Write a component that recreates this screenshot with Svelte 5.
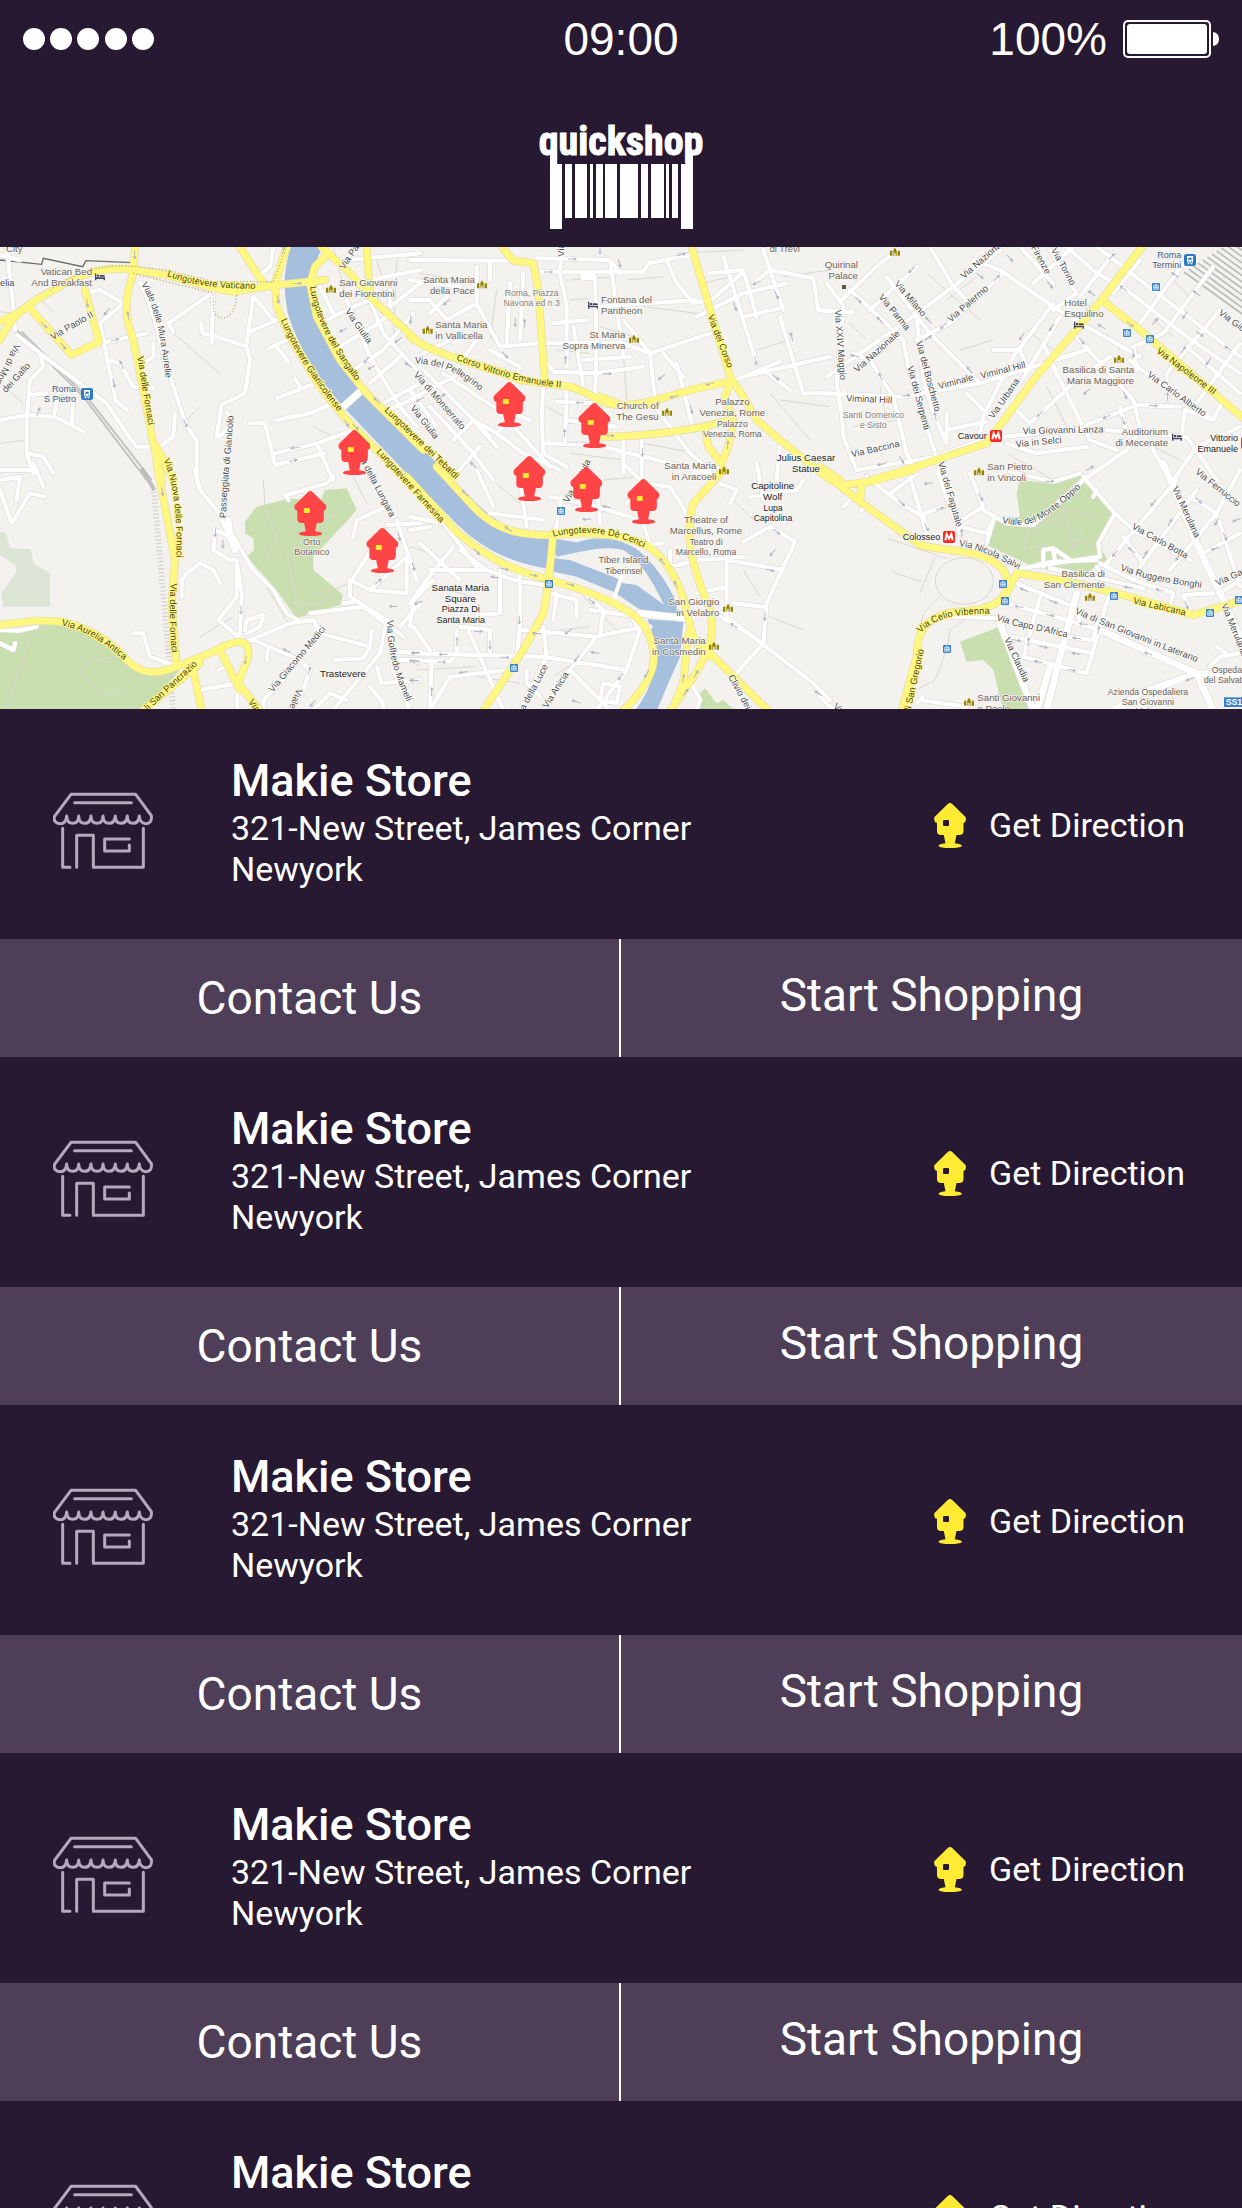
<script>
  const stores = Array.from({ length: 5 }, (_, id) => ({
    id,
    name: 'Makie Store',
    street: '321-New Street, James Corner',
    city: 'Newyork'
  }));

  // The map is stored as six sheets; every sheet has its own origin.
  const sheets = [
    {
      x: 0, y: -21,
      parks: '',
      pale: '',
      water: 'M935,-10C885,80 895,150 905,210C935,310 1000,400 1060,470L1270,690',
      thin: 'M0,215L45,220M100,160L160,215M0,430L70,490M0,610L80,600M560,540L600,500M850,270L1030,500M1000,21L1040,180M1130,60L1150,120M1190,60L1180,300M940,560L1040,610M520,280L660,400',
      minor: 'M420,130C470,220 480,330 510,410L560,560L590,600L590,720M250,160L300,150L370,190L300,250L330,400L345,470M300,310L440,280M640,150L635,310M635,285L740,320L750,360L735,460L665,495L650,590C690,580 700,530 680,520M760,170L740,310M750,275L830,240M765,175L820,240M505,250L635,160M505,250L520,275M603,250L608,280L635,285M805,325L860,300M830,320L865,365M830,475L945,430M885,415L900,440M830,540L930,520L1000,490M750,550L795,550L825,675L975,640M825,640L950,610L1060,570M950,610L1000,720M50,285L120,340L200,400L320,490L380,580L410,620L480,620L520,590L525,520M325,360L360,370L400,440L460,445M460,310L460,350L430,370M345,480L380,510M120,340L130,380L90,420L80,540L80,640L100,700M90,465L140,460M0,540L80,525L160,530L180,450L200,450M160,530L215,555L220,480M215,555L250,575M80,640L130,650L160,700M0,690L90,690M20,21L40,200L45,270M0,45L60,60M780,105L810,80L820,21M960,250L1060,200L1110,180M1040,180L1110,350L1200,500L1250,560M1110,180L1150,280L1260,400M1040,60L1260,40M1110,120L1260,90M1000,330L1120,260L1160,230M1060,390L1150,330L1240,220M1110,430L1200,350M1150,490L1260,430M1170,150L1170,200L1260,130M960,140L990,200L1000,220M1160,510L1260,470',
      wide: 'M1030,500L1092,445',
      yellow: 'M0,300C40,215 90,190 160,150C230,110 300,75 400,90L500,105C600,130 650,150 700,155L830,135L975,120M0,245L90,200M90,205L215,345L297,305L255,150M405,21L400,100C370,180 375,230 400,300L430,450L460,610L485,720M470,620L520,720M720,21L790,130M860,21L825,130L830,200L870,290L960,440L1040,540L1260,760M985,40L945,80L930,130L950,230L1020,360L1100,460L1270,630M965,21L1050,100L1130,190L1260,310M1100,21L1110,170'
    },
    {
      x: 1230, y: -21,
      parks: '',
      pale: '',
      water: '',
      thin: 'M480,120L620,110M480,180L540,175M650,120L760,110M570,260L700,300M640,340L650,480M880,130L960,110M800,40L1000,30M1120,110L1260,90M1040,330L1140,300M1080,460L1200,600M700,200L860,220M440,330L540,340M410,500L460,530M30,100L200,130M260,150L240,300M1110,480L1260,500M700,610L860,640M480,640L640,660',
      minor: 'M0,60L290,62M380,55L600,60L630,100M390,95L560,95L700,95L715,70L840,45M455,20L450,100L470,200L470,380M555,110L560,300L555,480M430,250L530,240M490,260L520,440M600,60L640,350M0,180L60,180L110,240L200,190L270,320L390,310L640,310L720,340L900,280M200,80L200,200M240,70L240,120M150,130L60,220M0,120L150,140M240,330L330,380L300,450M300,130L290,310M340,100L330,300M720,340L735,480M770,60L800,130L850,190L900,180M560,200L860,180M700,380L560,400L430,395L400,360M520,360L660,350M905,180L1000,95M900,100L1000,90L1040,230M940,50L1040,370M1000,230L1110,205M1030,130L1080,90L1210,115L1225,210L1260,215M1060,30L1120,210M1110,230L1180,460L1260,460M1000,410L1260,350M975,420L1110,365M1060,390L1140,450M860,230L1000,160L1130,130M800,370L850,570M760,340L820,410M640,240L720,340M735,500L840,640L900,690M400,430L395,540L400,640L470,680M470,440L465,610M270,500L330,580L420,680M130,600L190,540L260,580L340,640L450,690M190,540L260,620M60,500L190,640L250,720M0,480L150,400M30,380L240,590M100,400L250,500L360,540M340,500L260,580M400,610L560,615L900,700M640,590L640,700M695,590L695,720M560,490L440,485M1100,720L1110,620M120,720L210,620M0,450L80,560M470,540L620,560M140,380L200,300M40,340L120,300',
      wide: 'M520,110L545,110',
      yellow: 'M275,21L310,62L370,70L385,150L405,430M0,290C100,360 250,380 330,420L480,440C550,460 560,490 620,495C720,500 800,450 960,425M570,470L640,497L740,490M845,21L960,410L1000,470L1040,540L1110,600L1260,720M580,590C700,590 850,570 920,550L970,540M960,430L945,470L970,540L955,620L935,670L895,620L885,565'
    },
    {
      x: 2460, y: -21,
      parks: 'M740,720L790,700L800,720Z',
      pale: '',
      water: '',
      thin: 'M90,250L140,300M320,100L480,240M420,330L520,300M620,270L700,330M860,280L900,330M680,440L740,560M1000,240L1060,290M1120,340L1220,420M100,560L240,540M560,640L700,720M960,600L1080,660M820,180L760,260M180,440L200,540M1060,120L1120,180M380,180L470,110',
      minor: 'M0,210L100,215M70,200L50,430L65,520L70,590L110,690L350,650L510,590M65,180L170,80L230,30M20,130L65,190M150,210L290,80M90,150L150,205L250,300L265,380L370,720M20,410L250,250L400,140L540,30M200,110L330,280L480,430M290,300L390,250L550,100M290,230L310,420L340,520L380,610M0,460L250,470L480,430L800,330M100,340L150,360L220,470L260,640L290,700M330,20L400,140L440,180M460,60L540,90L700,200L800,260L960,350M700,190L580,350L490,530L480,580M720,230L630,380L600,430M600,20L700,130M640,130L760,20M690,30L770,160L700,210M830,20L1260,350M740,21L830,100L920,150L1100,290L1260,400M780,170L880,40M1030,280L1180,80M960,250L1090,70M880,160L960,60M1040,400L1200,210M1130,490L1260,310M1040,400L1040,480M770,290L940,480L960,560L1050,720M950,390L940,320L1030,280M930,360L990,410L1180,540L1210,480M590,510L630,550L760,430L870,350M550,590L760,570L950,495L1080,500M560,610L650,640L800,620M860,570L1100,590L1190,720M670,310L710,400L810,600L890,630M900,500L920,580M790,720L920,630L960,570M380,600L380,520M440,460L500,520M1085,590L1095,510L1180,540M1060,720L1130,620L1260,560M380,570L500,545M520,330L600,330L620,380M1100,320L1260,460',
      wide: '',
      yellow: 'M965,21L845,180L640,420L530,570L500,610C400,640 300,680 150,722M845,180L960,270L1270,535M0,680L60,720'
    },
    {
      x: 0, y: 669,
      parks: 'M770,110L870,85L960,95L975,60L1040,55L1070,120L1030,165L940,260L940,300L1030,375L1020,405L890,445L830,360L740,260L762,240L760,205L735,190L735,155ZM0,485L160,455C260,475 330,530 400,600L540,600L430,722L0,722Z',
      pale: 'M0,185L18,190L30,235L92,238L100,280L150,310L150,410L10,410L5,370L50,305L45,285L0,255Z',
      water: '',
      thin: 'M20,720L90,500L140,460L220,470M370,560L270,570L240,600L300,670L375,670M790,30L795,110L830,200L800,270M860,240L890,400L960,400L1010,370M900,180L1040,120M800,350L870,470M1060,20L1100,100M940,380L1050,340M1210,560L1260,590M600,500L700,440',
      minor: 'M585,0L600,60L650,120L690,200M690,200L645,180L640,240L690,270L710,270L710,380L655,450L740,520M710,270L725,370L720,490M700,200L760,300L820,360L860,430L900,455M740,515L870,460L940,450L960,490L1110,530L1115,480M1110,530L1090,565L1005,570M740,490L780,470L790,435L740,450L735,480M760,510L900,570L930,600L910,660L870,720M805,530L800,570M860,75L980,40L1000,20M865,90L855,75M930,430L1090,410L1210,500M1150,180L1050,340L1050,380L1160,450L1140,550L1000,720M1160,165L1260,160M1190,150L1250,330M1050,330L1110,360L1220,260M1110,360L1220,370L1220,270M1030,400L1060,395M1060,200L1070,150L1160,110M545,330L560,310L600,280L640,300L660,340M545,380L545,330M400,490L430,490L450,560L520,585M600,660L715,640M712,640L712,720M790,720L790,690L850,630M0,60L35,160L90,70L135,80M0,30L60,20L50,90M100,-20L130,50M0,480L60,482L110,470M0,520L40,540L45,520M655,600L680,590M1190,545L1260,545M1190,570L1260,570M1130,590L1145,640L1260,630M1110,650L1150,700L1150,720M1200,470L1260,400M1165,450L1180,600L1230,720M940,720L990,670L1040,690',
      wide: 'M685,150L690,200L705,240',
      yellow: 'M0,465L110,452L190,455C280,480 340,520 380,570C430,620 480,610 530,590L640,545C720,500 750,510 745,560L715,640L780,722M470,-20L525,270L515,400L530,590M660,540L720,660M580,600L605,722M600,580L430,722'
    },
    {
      x: 1230, y: 669,
      parks: 'M855,722L870,670L885,655L920,700L940,690L975,722Z',
      pale: '',
      water: 'M20,-20L140,100C220,190 300,235 430,255',
      thin: 'M0,230L60,250M90,350L180,380M520,380L620,480M450,480L540,470M200,620L330,640M960,80L1040,160M1000,300L1050,380M580,30L690,20M260,40L330,100M430,620L520,560M20,600L200,590M1080,440L1180,480',
      minor: 'M455,80L435,190M0,140L100,160L200,290M0,180L60,170M60,300L230,300L150,240M130,230L50,330L0,400M30,220L150,330M230,300L310,330L400,345M330,310L330,470L320,560M270,300L270,430L200,435M0,470L10,390L70,330M10,470L60,540M140,550L140,480M150,470L240,480L240,550M0,550L400,560L650,600M0,570L120,575L140,550M60,720L120,620L290,600M60,720L65,570M170,470L280,720M340,480L560,500L650,480L720,470M420,370L500,390L500,440M500,350L580,420L570,500M440,370L430,450M400,470L410,560L330,720M560,500L480,600L400,720M650,420L690,480L650,600L560,720M540,420L690,440M480,600L520,640L600,720M580,640L630,650L620,700L570,690ZM350,600L350,640L390,680M200,0L250,110M240,130L400,150M330,30L350,170M420,80L560,110L690,150M560,40L570,160M700,160L720,225L760,220M650,100L700,40L780,50L830,130M700,40L640,-20M780,240L780,290L870,270L1000,260M1000,215L1080,170L1155,215L1070,400L1060,520L970,620M930,40L980,60L960,100M1020,80L1160,60L1180,30M1040,-20L1060,90M950,260L950,440L1210,640L1260,690M860,370L950,350M970,400L1060,410M950,270L1120,300M1060,520L930,440M850,650L870,690L860,720M940,-10L850,10',
      wide: 'M690,430L845,447',
      yellow: 'M-10,20L140,185C260,290 350,310 420,330C560,370 680,420 710,480C750,560 740,620 640,722M80,-10L200,120C280,200 380,195 430,195C560,180 680,200 730,240C830,330 830,450 850,500L1075,722M430,190L415,340L400,430L340,540L220,722M940,0L850,100C820,200 850,300 900,420C920,500 900,560 780,722M835,490L820,640L785,722M850,510L900,560'
    },
    {
      x: 2460, y: 669,
      parks: 'M600,30L690,40L790,15L885,125L840,230L862,270L780,320L640,290L500,225L530,150L600,140L590,70ZM420,515L540,470L620,660L660,722L550,722L520,600L490,570L440,575Z',
      pale: '',
      water: '',
      thin: 'M346,333A87,70 0 1 0 520,333A87,70 0 1 0 346,333M200,205L380,265M345,260L300,370M215,305L305,335M360,380L310,430L300,480M440,445L390,480L380,540L345,630L250,680M640,120L610,240L680,220M640,180L760,120L830,140M720,60L760,240L790,180M690,140L740,200L820,230M540,230L560,290',
      minor: 'M70,110L100,80M125,120L140,95M140,20L240,100L310,140L330,200M210,70L280,20M300,135L370,110M270,20L320,190M350,0L420,190M450,10L490,110L410,160M420,170L500,190L520,150M490,120L560,160L640,165L790,30M500,220L520,150M790,20L885,130L940,180L1110,270M830,60L820,80M885,130L835,220L840,260L600,295M570,5L700,35L780,10M670,290L670,240L700,235L750,270M700,235L705,275M650,285L700,275L830,270M690,295L820,320L970,355M830,290L850,320M860,280L1070,30M960,290L1130,60M1050,300L1190,130L1260,0M910,200L970,280M1110,80L1190,130L1260,350M1150,250L1260,190M840,280C950,340 1000,350 1060,370L1050,410M1110,420L1090,375L1180,370M590,340L760,410L780,450M865,380L800,610L610,560L660,380M560,400L740,450L840,480M570,500L820,550M830,460L820,510L740,500M400,440L540,445M300,690L440,710M290,700L310,680M0,680L40,720M1190,530L1220,550M1170,590L1200,560L1260,550M1200,370L1260,330',
      wide: 'M1030,-20L1130,220L1270,520M770,370L710,600L680,722M540,460L640,722M840,480L1130,610L1260,615M1130,610L960,670L880,722M1130,610L1180,722M690,590L650,722',
      yellow: 'M0,0L120,95L300,225C380,245 470,240 520,275C560,300 580,340 545,385C500,430 420,420 380,430C320,450 290,480 290,560L245,722M70,45L150,35L280,0M555,380L590,310C750,330 900,370 1120,435L1270,390M120,95L125,45'
    }
  ];

  // sheet, x, y, anchor, size, tone, lines
  const places = [
    [0, 276, 106, 'end', 29, 'poi', ['Vatican Bed', 'And Breakfast']],
    [0, 0, 139, 'start', 28, 'street', ['elia']],
    [0, 18, 36, 'start', 29, 'poi', ['City']],
    [0, 1018, 139, 'start', 29, 'poi', ['San Giovanni', 'dei Fiorentini']],
    [0, 228, 456, 'end', 27, 'rail', ['Roma', 'S Pietro']],
    [1, 195, 130, 'end', 29, 'poi', ['Santa Maria', 'della Pace']],
    [1, 76, 265, 'start', 29, 'poi', ['Santa Maria', 'in Vallicella']],
    [1, 365, 168, 'middle', 26, 'pale', ['Roma, Piazza', 'Navona ed n 3']],
    [1, 573, 190, 'start', 29, 'poi', ['Fontana del', 'Pantheon']],
    [1, 646, 293, 'end', 29, 'poi', ['St Maria', 'Sopra Minerva']],
    [1, 746, 508, 'end', 29, 'poi', ['Church of', 'The Gesu']],
    [1, 967, 496, 'middle', 29, 'poi', ['Palazzo', 'Venezia, Rome']],
    [1, 967, 561, 'middle', 26, 'poi', ['Palazzo', 'Venezia, Roma']],
    [1, 919, 688, 'end', 29, 'poi', ['Santa Maria', 'in Aracoeli']],
    [1, 1188, 664, 'middle', 29, 'town', ['Julius Caesar', 'Statue']],
    [1, 1124, 36, 'middle', 28, 'poi', ['di Trevi']],
    [2, 114, 84, 'end', 29, 'poi', ['Quirinal', 'Palace']],
    [2, 1084, 54, 'end', 27, 'rail', ['Roma', 'Termini']],
    [2, 733, 199, 'start', 29, 'poi', ['Hotel', 'Esquilino']],
    [2, 942, 400, 'end', 29, 'poi', ['Basilica di Santa', 'Maria Maggiore']],
    [2, 1044, 586, 'end', 29, 'poi', ['Auditorium', 'di Mecenate']],
    [2, 1254, 604, 'end', 27, 'town', ['Vittorio', 'Emanuele']],
    [2, 160, 534, 'middle', 26, 'pale', ['Santi Domenico', 'e Sisto']],
    [2, 500, 597, 'end', 27, 'town', ['Cavour']],
    [2, 502, 691, 'start', 29, 'poi', ['San Pietro', 'in Vincoli']],
    [3, 935, 225, 'middle', 27, 'poi', ['Orto', 'Botanico']],
    [3, 1029, 621, 'middle', 29, 'town', ['Trastevere']],
    [4, 151, 363, 'middle', 29, 'town', ['Sanata Maria', 'Square']],
    [4, 152, 427, 'middle', 27, 'town', ['Piazza Di', 'Santa Maria']],
    [4, 640, 279, 'middle', 29, 'poi', ['Tiber Island']],
    [4, 641, 311, 'middle', 26, 'poi', ['Tiberinsel']],
    [4, 1088, 58, 'middle', 29, 'town', ['Capitoline', 'Wolf']],
    [4, 1089, 124, 'middle', 26, 'town', ['Lupa', 'Capitolina']],
    [4, 888, 160, 'middle', 29, 'poi', ['Theatre of', 'Marcellus, Rome']],
    [4, 888, 224, 'middle', 26, 'poi', ['Teatro di', 'Marcello, Roma']],
    [4, 928, 406, 'end', 29, 'poi', ['San Giorgio', 'in Velabro']],
    [4, 887, 523, 'end', 29, 'poi', ['Santa Maria', 'in Cosmedin']],
    [5, 361, 210, 'end', 27, 'town', ['Colosseo']],
    [5, 855, 321, 'end', 29, 'poi', ['Basilica di', 'San Clemente']],
    [5, 472, 692, 'start', 29, 'poi', ['Santi Giovanni', 'e Paolo']],
    [5, 984, 675, 'middle', 26, 'poi', ['Azienda Ospedaliera', 'San Giovanni', 'Addolorata']],
    [5, 1266, 609, 'end', 26, 'poi', ['Ospeda', 'del Salvat']]
  ];

  // sheet, baseline path, text, lies on a main road
  const streets = [
    [0, 'M500,108C580,135 640,148 800,146', 'Lungotevere Vaticano', 1],
    [0, 'M158,300L320,208', 'Via Paolo II', 0],
    [0, 'M424,132C470,215 485,300 500,450', 'Viale delle Mura Aurelie', 0],
    [0, 'M412,350C425,430 435,500 460,640', 'Via delle Fornaci', 1],
    [0, 'M490,660C525,730 533,850 528,990', 'Via Nuova delle Fornaci', 1],
    [0, 'M842,240C880,330 940,430 1060,570', 'Lungotevere Gianicolense', 1],
    [0, 'M930,140C945,250 1010,350 1110,480', 'Lungotevere del Sangallo', 1],
    [0, 'M1152,512L1420,770', 'Lungotevere dei Tebaldi', 1],
    [0, 'M1128,636L1440,980', 'Lungotevere Farnesina', 1],
    [0, 'M1034,214L1130,350', 'Via Giulia', 0],
    [0, 'M1032,90L1100,-10', 'Via Paola', 0],
    [0, 'M1070,640L1190,870', 'Via della Lungara', 0],
    [0, 'M18,460L100,370', 'dei Gallo', 0],
    [0, 'M45,310L-20,440', 'Via di Mon', 0],
    [0, 'M678,835C680,720 700,600 702,480', 'Passeggiata di Gianicolo', 0],
    [1, 'M138,360C240,395 340,440 500,445', 'Corso Vittorio Emanuele II', 1],
    [1, 'M14,370C90,375 140,385 240,480', 'Via del Pellegrino', 0],
    [1, 'M10,405L180,600', 'Via di Monserrato', 0],
    [1, 'M0,505L90,620', 'Via Giulia', 0],
    [1, 'M893,228L970,430', 'Via del Corso', 1],
    [1, 'M462,50L462,-30', 'Via', 0],
    [1, 'M475,790L545,660', 'Via Arenula', 0],
    [2, 'M222,132L330,260', 'Via Milano', 0],
    [2, 'M175,172L280,300', 'Via Parma', 0],
    [2, 'M432,118L590,-20', 'Via Nazionale', 0],
    [2, 'M112,398L280,250', 'Via Nazionale', 0],
    [2, 'M392,248L540,120', 'Via Palermo', 0],
    [2, 'M44,210L64,470', 'Via XXIV Maggio', 0],
    [2, 'M288,306L362,580', 'Via del Boschetto', 0],
    [2, 'M262,380L330,640', 'Via dei Serpenti', 0],
    [2, 'M358,448L490,412', 'Viminale', 0],
    [2, 'M484,416L660,372', 'Viminal Hill', 0],
    [2, 'M78,484L260,492', 'Viminal Hill', 0],
    [2, 'M520,538L630,380', 'Via Urbana', 0],
    [2, 'M96,652L280,610', 'Via Baccina', 0],
    [2, 'M608,582L900,576', 'Via Giovanni Lanza', 0],
    [2, 'M588,622L770,604', 'Via in Selci', 0],
    [2, 'M692,30L770,170', 'Via Torino', 0],
    [2, 'M610,-20L680,110', 'Via Firenze', 0],
    [2, 'M1008,336L1240,510', 'Via Napoleone III', 1],
    [2, 'M980,408L1190,560', 'Via Carlo Alberto', 0],
    [2, 'M1194,222L1300,300', 'Via Gio', 0],
    [2, 'M354,668L424,910', 'Via del Fagutale', 0],
    [2, 'M1124,698L1300,840', 'Via Ferruccio', 0],
    [3, 'M184,466C250,480 310,510 410,605', 'Via Aurelia Antica', 1],
    [3, 'M512,340C508,420 505,480 525,620', 'Via delle Fornaci', 1],
    [3, 'M444,722L640,540', 'li San Pancrazio', 1],
    [3, 'M818,668L1010,440', 'Via Giacomo Medici', 0],
    [3, 'M1162,450C1160,540 1180,620 1250,760', 'Via Goffredo Mameli', 0],
    [3, 'M890,655L850,760', 'Viale', 0],
    [3, 'M744,695L800,780', 'Via', 1],
    [4, 'M430,200C520,180 620,180 750,260', 'Lungotevere Dè Cenci', 1],
    [4, 'M344,722L430,560', 'a della Luce', 0],
    [4, 'M412,716L510,560', 'Via Anicia', 0],
    [4, 'M954,620L1030,760', 'Clivio dei', 0],
    [5, 'M545,158C640,180 680,150 820,18', 'Viale del Monte Oppio', 0],
    [5, 'M416,228C480,235 540,270 640,320', 'Via Nicola Salvi', 0],
    [5, 'M302,490C350,435 420,432 560,430', 'Via Celio Vibenna', 1],
    [5, 'M528,450C600,475 660,480 790,515', "Via Capo D'Africa", 0],
    [5, 'M552,508L640,700', 'Via Claudia', 0],
    [5, 'M764,430C860,470 980,520 1180,595', 'Via di San Giovanni in Laterano', 0],
    [5, 'M938,400L1150,450', 'Via Labicana', 1],
    [5, 'M900,300C980,330 1060,345 1200,360', 'Via Ruggero Bonghi', 0],
    [5, 'M934,175L1140,290', 'Via Carlo Botta', 0],
    [5, 'M1056,55L1150,260', 'Via Merulana', 0],
    [5, 'M1204,405L1290,620', 'Via Merulana', 0],
    [5, 'M1192,348L1300,300', 'Via Ga', 0],
    [5, 'M272,722L320,500', 'li San Gregorio', 1],
    [5, 'M38,712L120,780', 'Via', 0]
  ];

  // sheet, x, y
  const churches = [[0, 993, 147], [1, 216, 134], [1, 53, 270], [1, 672, 297], [1, 771, 516], [1, 942, 692], [2, 225, 36], [2, 897, 357], [2, 477, 695], [4, 954, 414], [4, 912, 528], [5, 810, 381], [5, 447, 696]];
  const hotels = [[0, 300, 110], [1, 549, 195], [2, 777, 255], [2, 1071, 591]];
  const buses = [[2, 1008, 141], [2, 921, 279], [2, 990, 297], [4, 453, 123], [4, 417, 342], [4, 312, 594], [5, 549, 342], [5, 555, 393], [5, 381, 537], [5, 882, 378], [5, 1170, 429], [5, 1257, 390]];
  const stations = [[0, 261, 462], [2, 1110, 60]];
  const metros = [[2, 528, 588], [5, 387, 201], [2, 1281, 609]];

  // sheet, x, y, heading
  const arrows = [
    [0, 404, 45, 90], [0, 132, 255, 45], [0, 262, 190, 80], [0, 320, 215, 130], [0, 345, 300, -15], [0, 365, 375, 245], [0, 385, 228, 260], [0, 190, 318, 50], [0, 341, 430, 75], [0, 556, 550, 65], [0, 115, 515, 290], [0, 892, 130, 0], [0, 850, 30, 280], [0, 834, 178, 80], [0, 1130, 482, 225], [0, 1066, 560, 45], [0, 885, 624, 175], [0, 880, 662, -15], [0, 1040, 550, 60], [0, 1232, 238, 95], [0, 1100, 360, 130], [0, 1195, 300, 140], [0, 1030, 270, 155], [0, 1115, 382, 150], [0, 1225, 375, 215],
    [1, 487, 57, 0], [1, 415, 96, 0], [1, 628, 70, 75], [1, 570, 30, 90], [1, 815, 44, -15], [1, 316, 248, 90], [1, 344, 250, 270], [1, 467, 360, 270], [1, 592, 401, 0], [1, 510, 488, 180], [1, 285, 345, 50], [1, 755, 411, 140], [1, 900, 432, 165], [1, 792, 470, 165], [1, 975, 200, 70], [1, 1145, 290, 255], [1, 1037, 362, 75], [1, 1097, 413, 35], [1, 1040, 128, 155], [1, 1100, 165, 65], [1, 844, 508, 75], [1, 697, 637, 90], [1, 953, 615, 275], [1, 600, 587, 0], [1, 110, 187, 140], [1, 464, 580, 270], [1, 190, 675, 225], [1, 30, 478, 150], [1, 95, 468, -30],
    [2, 275, 90, 135], [2, 115, 180, 45], [2, 180, 240, 225], [2, 105, 348, 190], [2, 182, 410, 245], [2, 258, 467, -5], [2, 346, 530, 255], [2, 370, 258, 140], [2, 325, 240, 225], [2, 325, 294, -35], [2, 448, 390, 230], [2, 530, 115, -45], [2, 570, 55, 45], [2, 605, 290, 125], [2, 695, 262, 125], [2, 690, 135, 50], [2, 785, 303, 50], [2, 845, 260, 210], [2, 815, 160, 215], [2, 875, 50, 310], [2, 930, 252, 40], [2, 910, 145, 215], [2, 1005, 245, 310], [2, 1065, 105, 215], [2, 1130, 160, 215], [2, 1095, 225, 125], [2, 1140, 282, 35], [2, 1090, 330, 305], [2, 1165, 365, 125], [2, 1225, 325, 215], [2, 940, 340, 85], [2, 1042, 470, 270], [2, 915, 465, 65], [2, 1000, 497, 5], [2, 860, 530, 155], [2, 800, 455, 140], [2, 660, 522, 140], [2, 910, 542, 70], [2, 185, 673, 170], [2, 245, 660, 60], [2, 810, 685, -30], [2, 480, 108, 40],
    [3, 487, 65, 80], [3, 646, 188, 95], [3, 669, 222, 90], [3, 723, 420, 90], [3, 737, 570, 100], [3, 1180, 409, 180], [3, 1135, 335, -40], [3, 1197, 200, 75], [3, 1240, 290, 75], [3, 860, 542, 205], [3, 928, 603, 280], [3, 938, 700, 130], [3, 1240, 631, 180], [3, 1240, 572, 180], [3, 1245, 550, 180],
    [4, 165, 70, 225], [4, 295, 177, 215], [4, 200, 245, 45], [4, 283, 297, 10], [4, 370, 316, 10], [4, 480, 344, 15], [4, 255, 322, 190], [4, 25, 398, 160], [4, 205, 484, 0], [4, 141, 515, 270], [4, 240, 525, 90], [4, 328, 450, 90], [4, 380, 490, 185], [4, 475, 485, 145], [4, 18, 547, 180], [4, 100, 553, 180], [4, 18, 573, 180], [4, 95, 576, 0], [4, 285, 562, 0], [4, 160, 607, 170], [4, 15, 632, 180], [4, 65, 665, 270], [4, 555, 548, 190], [4, 500, 566, 130], [4, 710, 612, 120], [4, 632, 620, 125], [4, 498, 695, 200], [4, 757, 275, 230], [4, 798, 345, 245], [4, 820, 625, 280], [4, 858, 612, 300], [4, 827, 667, 305], [4, 1100, 185, 40], [4, 1088, 248, 130], [4, 1080, 300, 15], [4, 1065, 440, 95], [4, 972, 467, 215], [4, 1225, 670, 215], [4, 530, 148, 180], [4, 590, 110, 190], [4, 545, 393, 40],
    [5, 325, 40, 170], [5, 245, 100, 40], [5, 360, 116, -20], [5, 320, 172, 65], [5, 482, 82, 60], [5, 425, 190, 270], [5, 690, 34, 0], [5, 1000, 98, 130], [5, 1050, 158, 300], [5, 885, 250, 130], [5, 935, 240, 220], [5, 975, 255, 300], [5, 1185, 235, 160], [5, 1250, 150, 160], [5, 1190, 155, 120], [5, 1135, 92, 40], [5, 1075, 262, 130], [5, 1215, 200, 65], [5, 925, 352, 190], [5, 1020, 360, 195], [5, 1100, 405, 65], [5, 612, 360, 205], [5, 700, 395, 20], [5, 597, 410, 190], [5, 690, 436, 10], [5, 790, 462, 185], [5, 835, 480, 280], [5, 590, 511, 10], [5, 670, 531, 10], [5, 768, 551, 190], [5, 625, 515, 280], [5, 770, 505, 190], [5, 655, 575, 190], [5, 755, 600, 10], [5, 985, 551, 200], [5, 1110, 627, 160]
  ];

  // tip of every shop marker, in map units
  const markers = [[1063, 549], [1528, 405], [1783, 468], [1588, 627], [1759, 660], [1930, 696], [931, 732], [1147, 843]];

  const shift = (n) => `translate(${sheets[n].x} ${sheets[n].y})`;
  const at = ([n, x, y]) => `translate(${sheets[n].x + x} ${sheets[n].y + y})`;
  const tracks = Array.from({ length: 12 }, (_, i) => `M${1092 + i * 14},${96 - i * 9}l230,166`).join('');
</script>

{#snippet birdhouse()}
  <path d="M13.5,1.2Q16,-1.2 18.5,1.2L31.5,14Q33,18.5 29.5,20V27.500Q29.500,32 25.500,32H22.500L20.800,40.200Q28,41 28,43Q26,45 16,45Q6,45 4.500,43Q4.500,41 11.500,40.200L9.800,32H7Q3,32 3,28V20Q-1,18.500 0.500,14Z" />
{/snippet}

<div class="screen">
  <header>
    <div class="status">
      <svg class="signal" viewBox="0 0 131 22" role="img" aria-label="Signal: full">
        {#each [11, 38, 65, 93, 120] as cx}<circle {cx} cy="11" r="11" />{/each}
      </svg>
      <time>09:00</time>
      <div class="power">
        <span>100%</span>
        <svg class="battery" viewBox="0 0 96 38" aria-hidden="true">
          <rect x="1" y="1" width="86" height="36" rx="4" fill="none" stroke="#fff" stroke-width="2" />
          <rect x="4" y="4" width="80" height="30" rx="3" />
          <path d="M90,12Q96,13 96,19T90,26Z" />
        </svg>
      </div>
    </div>
    <svg class="logo" viewBox="0 0 161 120" role="img" aria-label="quickshop">
      <text class="word" x="80" y="46" text-anchor="middle">quickshop</text>
      <path d="M9,44H16V55H21V120H9ZM145,44H152V120H140V55H145Z" />
      <path d="M24,55h7v54h-7zM34,55h12v54h-12zM49,55h3v54h-3zM55,55h7v54h-7zM64,55h12v54h-12zM79,55h18v54h-18zM100,55h7v54h-7zM110,55h13v54h-13zM125,55h3v54h-3zM131,55h6v54h-6z" />
    </svg>
  </header>

  <main>
    <svg class="map" viewBox="0 0 3726 1386" role="img" aria-label="Map of shops in Rome">
      <rect width="3726" height="1386" fill="#f3f2ef" />
      {#each sheets as s, n}
        <g transform={shift(n)}>
          <path d={s.pale} fill="#dce4d5" />
          <path d={s.parks} fill="#c9dfaf" />
          <path class="thin" d={s.thin} />
        </g>
      {/each}
      {#each sheets as s, n}
        <path class="river" d={s.water} transform={shift(n)} />
      {/each}
      <g transform={shift(4)} fill="#a5bfdd">
        <path d="M420,205L500,217C560,195 640,205 690,245C740,290 780,350 800,400V440L765,450L760,400C730,340 700,280 640,240C580,225 520,245 440,260Z" />
        <path d="M430,265L480,270L620,325L640,340L680,345L770,410L820,430L760,440L700,425L610,365L500,320L430,305Z" />
        <path d="M712,448L820,455L810,560L775,640L740,722L675,722C730,650 760,560 712,448Z" />
      </g>
      <g transform={shift(4)} class="minor"><path d="M640,305L612,385" /></g>

      <g transform={shift(0)}>
        <path d="M50,270L250,470L440,720M65,275L260,470L455,720" fill="none" stroke="#c2c2c0" stroke-width="6" />
        <path d="M425,685L463,750" fill="none" stroke="#bdbdbb" stroke-width="12" />
        <path d="M462,755L495,1120L520,1420" fill="none" stroke="#d5d4d1" stroke-width="18" stroke-dasharray="4 7" />
        <path d="M0,60L125,73L130,55L248,80L258,62L397,68V21" fill="none" stroke="#6b6b6b" stroke-width="4" />
      </g>
      <path d={tracks} transform={shift(2)} fill="none" stroke="#bcbcba" stroke-width="5" />

      {#each sheets as s, n}
        <g transform={shift(n)} class="casing">
          <path d={s.minor} stroke-width="16" />
          <path d={s.wide} stroke-width="24" />
        </g>
      {/each}
      {#each sheets as s, n}
        <g transform={shift(n)} class="minor">
          <path d={s.minor} />
          <path d={s.wide} stroke-width="20" />
        </g>
      {/each}
      {#each sheets as s, n}
        <path class="edge" d={s.yellow} transform={shift(n)} />
      {/each}
      {#each sheets as s, n}
        <path class="main-road" d={s.yellow} transform={shift(n)} />
      {/each}
      <path d="M150,150C300,50 400,80 500,90L640,125L820,125L860,21M400,100L640,160L640,200C640,250 710,250 710,160" transform={shift(0)} fill="none" stroke="#bdb382" stroke-width="4" stroke-dasharray="4 6" />

      {#each arrows as a}
        <g transform={at(a)}><path class="arrow" d="M-13,0H12M4,-4L12,0L4,4" transform={`rotate(${a[3]})`} /></g>
      {/each}

      {#each churches as c}
        <path transform={at(c)} fill="#978500" d="M-15,-4h7v15h-7zM8,-4h7v15h-7zM-5,11V-5L0,-13L5,-5V11H2V3H-2V11z" />
      {/each}
      {#each hotels as h}
        <path transform={at(h)} fill="#454768" d="M-15,-10h4v12h26v9h-4v-4h-22v4h-4zM-9,-6h7v6h-7zM0,-5h12l3,5h-15z" />
      {/each}
      {#each buses as b}
        <g transform={at(b)}>
          <rect x="-12" y="-12" width="24" height="24" rx="3" fill="#3a82c8" />
          <path d="M-7,-5H7V7H-7ZM-7,1H7M-3,-8H3M-2,-5V6M3,-5V6" fill="none" stroke="#fff" stroke-width="2" />
        </g>
      {/each}
      {#each stations as b}
        <g transform={at(b)}>
          <rect x="-18" y="-18" width="36" height="36" rx="7" fill="#2b7ac4" />
          <path d="M-9,-12H9V7H-9ZM-7,8h5v5h-5zM2,8h5v5h-5z" fill="#fff" />
          <path d="M-5,-7H5V-1H-5ZM-6,2h3v3h-3zM3,2h3v3h-3z" fill="#2b7ac4" />
        </g>
      {/each}
      {#each metros as m}
        <g transform={at(m)}>
          <rect x="-18" y="-18" width="36" height="36" rx="6" fill="#fa2a1e" />
          <path d="M-11,10L-7,-8L0,5L7,-8L11,10" fill="none" stroke="#fff" stroke-width="6" />
        </g>
      {/each}
      <rect x="2526" y="114" width="12" height="12" fill="#5d5448" />

      {#each streets as [n, d, text, major], i}
        <g transform={shift(n)}>
          <path id={`street-${i}`} {d} fill="none" />
          <text class="street" class:major><textPath href={`#street-${i}`}>{text}</textPath></text>
        </g>
      {/each}
      {#each places as p}
        <text class={p[5]} transform={at(p)} text-anchor={p[3]} font-size={p[4]}>
          {#each p[6] as line, i}<tspan x="0" y={i * (p[4] + 4)}>{line}</tspan>{/each}
        </text>
      {/each}
      <g transform={shift(5)}>
        <rect x="1212" y="682" width="60" height="29" fill="#3f7fcb" />
        <text class="shield" x="1217" y="706">SS1</text>
      </g>

      {#each markers as [x, y]}
        <g transform={`translate(${x - 48} ${y}) scale(3)`} fill="#ff4545">
          {@render birdhouse()}
          <rect x="9.500" y="17" width="6" height="5" rx="1" fill="#ffeb33" />
        </g>
      {/each}
    </svg>

    <ul>
      {#each stores as store (store.id)}
        <li>
          <div class="info">
            <svg class="shop" viewBox="69 66 300 231" aria-hidden="true">
              <path d="M123,73H317L364,137Q367,161 347,161Q329,159 328,138Q326,160 309,160Q292,160 292,138Q290,160 273,160Q256,160 256,138Q254,160 237,160Q220,160 219,138Q218,160 201,160Q184,160 183,138Q181,160 164,160Q147,160 146,138Q145,160 128,160Q111,160 110,138Q108,161 91,161Q70,160 73,140Z" />
              <path d="M134,98H304M98,175V292H120M140,292V196H190V292H340V175M298,207H224V243H298V225" />
            </svg>
            <div class="text">
              <h2>{store.name}</h2>
              <address>{store.street}<br />{store.city}</address>
            </div>
            <a href="#directions">
              <svg class="pin" viewBox="0 0 32 45" aria-hidden="true">
                {@render birdhouse()}
                <rect x="9" y="17" width="6" height="6" rx="1" fill="#281932" />
              </svg>
              Get Direction
            </a>
          </div>
          <div class="actions">
            <button type="button">Contact Us</button>
            <button type="button" class="shopping">Start Shopping</button>
          </div>
        </li>
      {/each}
    </ul>
  </main>
</div>

<style>
  :global(body) {
    margin: 0;
    background: #281932;
  }
  .screen {
    height: 100vh;
    overflow: hidden;
    background: #281932;
    color: #fff;
    font-family: Roboto, 'Liberation Sans', sans-serif;
  }
  svg {
    display: block;
  }
  header {
    display: flex;
    flex-direction: column;
    align-items: center;
    padding-bottom: 18px;
  }
  .status {
    align-self: stretch;
    display: grid;
    grid-template-columns: 1fr auto 1fr;
    align-items: center;
    height: 78px;
    padding: 0 23px;
    font: 46px 'Liberation Sans', Arial, sans-serif;
  }
  .signal {
    width: 131px;
    height: 22px;
    fill: #fff;
  }
  .power {
    display: flex;
    align-items: center;
    justify-content: flex-end;
    gap: 16px;
  }
  .battery {
    width: 96px;
    height: 38px;
    fill: #fff;
  }
  .logo {
    width: 161px;
    height: 120px;
    margin-top: 31px;
    fill: #fff;
    overflow: visible;
  }
  .word {
    font: bold 40px 'Liberation Sans Narrow', 'Roboto Condensed', 'Open Sans Condensed', sans-serif;
    stroke: #fff;
    stroke-width: 1px;
  }
  .map {
    width: 100%;
    height: auto;
    font-family: 'Liberation Sans', Arial, sans-serif;
  }
  .thin {
    fill: none;
    stroke: #dbd8d0;
    stroke-width: 3;
  }
  .river {
    fill: none;
    stroke: #a5bfdd;
    stroke-width: 86;
  }
  .casing,
  .minor,
  .edge,
  .main-road {
    fill: none;
    stroke-linecap: round;
    stroke-linejoin: round;
  }
  .casing {
    stroke: #e0deda;
  }
  .minor {
    stroke: #fff;
    stroke-width: 12;
  }
  .edge {
    stroke: #e4dca6;
    stroke-width: 24;
  }
  .main-road {
    stroke: #fff77f;
    stroke-width: 20;
  }
  .arrow {
    fill: none;
    stroke: #b2b7c3;
    stroke-width: 3;
  }
  .map text {
    paint-order: stroke;
    stroke: #f8f7f4;
    stroke-width: 4;
    stroke-linejoin: round;
  }
  .map .street {
    font-size: 28px;
    fill: #4a4a48;
    stroke: #fff;
  }
  .map .major {
    fill: #4a4412;
    stroke: #fff77f;
    stroke-width: 6;
  }
  .poi {
    fill: #6e6459;
  }
  .pale {
    fill: #8b8378;
  }
  .town {
    fill: #1c1c1c;
  }
  .rail {
    fill: #3b5b85;
  }
  .map .shield {
    font-size: 26px;
    font-weight: bold;
    fill: #fff;
    stroke: none;
  }
  ul {
    margin: 0;
    padding: 0;
    list-style: none;
  }
  .info {
    display: flex;
    align-items: flex-start;
    height: 230px;
    padding: 0 57px 0 53px;
    box-sizing: border-box;
  }
  .shop {
    flex: none;
    width: 100px;
    height: 77px;
    margin: 83px 78px 0 0;
    fill: none;
    stroke: #b5a9bd;
    stroke-width: 9;
    stroke-linecap: round;
    stroke-linejoin: round;
  }
  .text {
    flex: 1;
    padding-top: 45px;
  }
  h2 {
    margin: 0;
    font-size: 45px;
    font-weight: 500;
    line-height: 54px;
  }
  address {
    font-size: 34px;
    font-style: normal;
    line-height: 41px;
  }
  a {
    display: flex;
    align-items: center;
    gap: 23px;
    margin-top: 92px;
    color: inherit;
    font-size: 34px;
    line-height: 49px;
    text-decoration: none;
  }
  .pin {
    width: 32px;
    height: 45px;
    fill: #ffeb33;
  }
  .actions {
    display: grid;
    grid-template-columns: 1fr 1fr;
    height: 118px;
    background: #4e3e57;
  }
  button {
    margin: 0;
    padding: 0;
    border: 0;
    background: none;
    color: inherit;
    font: inherit;
    font-size: 46px;
  }
  button:first-child {
    border-right: 2px solid #fff;
  }
  .shopping {
    padding-bottom: 6px;
  }
</style>
